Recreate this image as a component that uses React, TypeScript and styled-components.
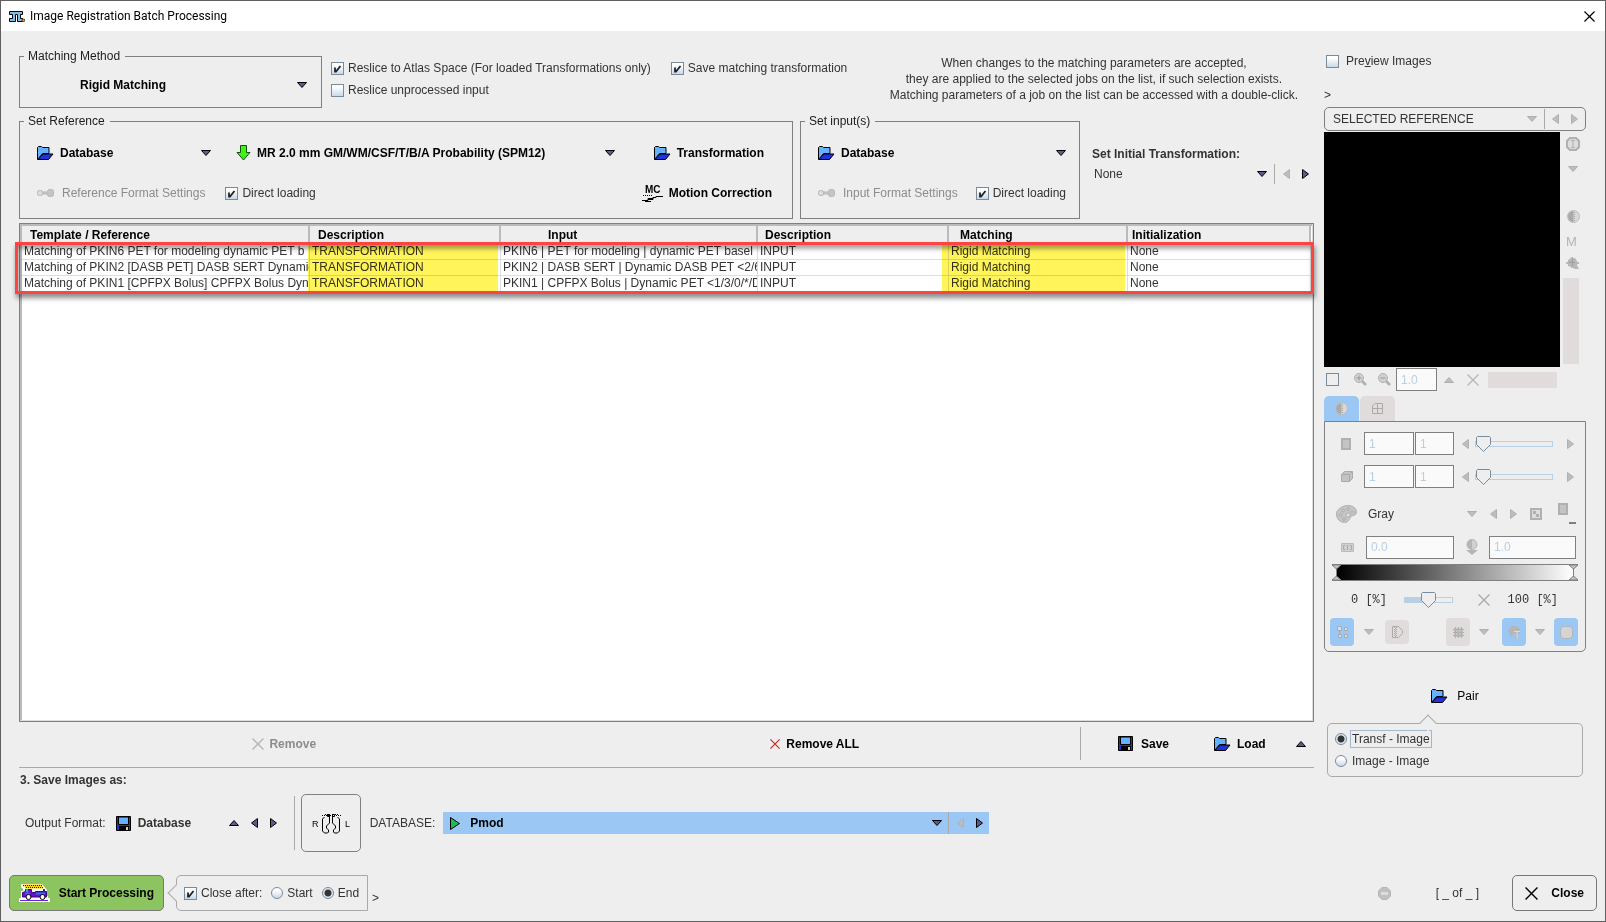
import React, { ReactNode } from 'react';
import styled, { createGlobalStyle, css } from 'styled-components';

const GlobalStyle = createGlobalStyle`
  *, *::before, *::after { box-sizing: border-box; }
  body { margin: 0; background: #eee; }
  body, button, input, select { font: 12px/16px "Liberation Sans", Arial, sans-serif; color: #333; }
  svg { display: block; flex: none; }
`;

/* ---------- shell ---------- */

const Window = styled.div`
  display: flex;
  flex-direction: column;
  min-height: 100vh;
  border: 1px solid #5f5f5f;
  background: #eee;
`;

const TitleBar = styled.header`
  display: flex;
  align-items: center;
  height: 30px;
  padding: 0 10px 0 8px;
  background: #fff;
`;

const Title = styled.h1`
  flex: 1;
  margin: 0 0 0 5px;
  font: 12px/16px Roboto, sans-serif;
  color: #000;
`;

const Content = styled.main`
  display: flex;
  flex: 1;
  gap: 10px;
  padding: 17px 19px 0 18px;
`;

const MainColumn = styled.div`
  display: flex;
  flex: 1;
  flex-direction: column;
  min-width: 0;
`;

const SideColumn = styled.aside`
  display: flex;
  flex-direction: column;
  width: 262px;
  flex: none;
`;

const Spacer = styled.span`
  flex: 1;
`;

/* ---------- controls ---------- */

const PlainButton = styled.button<{ $bold?: boolean; $gap?: number; $start?: number; $end?: number }>`
  display: inline-flex;
  align-items: center;
  gap: ${p => p.$gap ?? 6}px;
  margin: 0 ${p => p.$end ?? 0}px 0 ${p => p.$start ?? 0}px;
  padding: 0;
  border: 0;
  background: none;
  color: #000;
  font-weight: ${p => (p.$bold ? 700 : 400)};
  white-space: nowrap;
  &:disabled { color: #8c8c8c; }
`;

const ComboButton = styled(PlainButton)<{ $width: number }>`
  width: ${p => p.$width}px;
  text-align: left;
`;

const CheckLabel = styled.label<{ $gap?: number; $start?: number }>`
  display: inline-flex;
  align-items: center;
  gap: ${p => p.$gap ?? 4}px;
  margin-left: ${p => p.$start ?? 0}px;
  white-space: nowrap;
`;

const Check = styled.input.attrs({ type: 'checkbox' })<{ $flat?: boolean }>`
  appearance: none;
  flex: none;
  width: 13px;
  height: 13px;
  margin: 0;
  border: 1px solid #7a8a99;
  background: ${p => (p.$flat ? '#eee' : 'linear-gradient(#fff 20%, #c8d9ea)')};
  &:checked {
    background: url("data:image/svg+xml,%3Csvg xmlns='http://www.w3.org/2000/svg' width='11' height='11'%3E%3Cpath d='M3 4.500v4h1L8.500 3' fill='none' stroke='%23222' stroke-width='1.8'/%3E%3C/svg%3E"), linear-gradient(#fff 20%, #c8d9ea);
  }
`;

const Radio = styled.input.attrs({ type: 'radio' })`
  appearance: none;
  flex: none;
  width: 12px;
  height: 12px;
  margin: 0;
  border: 1px solid #7a8a99;
  border-radius: 50%;
  background: linear-gradient(#fff 25%, #c8d9ea);
  &:checked { background: radial-gradient(circle, #333 0 3px, #dce8f4 4px); }
`;

const TextBox = styled.input.attrs({ type: 'text' })<{ $width: number }>`
  width: ${p => p.$width}px;
  height: 23px;
  padding: 0 4px;
  border: 1px solid #808080;
  border-radius: 0;
  background: #fafafa;
  color: #b8cfe5;
  outline: 0;
`;

const VLine = styled.span<{ $height: number }>`
  flex: none;
  width: 1px;
  height: ${p => p.$height}px;
  background: #a9a9a9;
`;

const Group = styled.fieldset<{ $height: number }>`
  display: flex;
  flex-direction: column;
  min-width: 0;
  height: ${p => p.$height}px;
  margin: 0;
  padding: 0;
  border: 1px solid #808080;
`;

const Legend = styled.legend`
  margin-left: 4px;
  padding: 0 5px 0 4px;
  color: #1c1c1c;
`;

/* ---------- glyphs ---------- */

type Dir = 'down' | 'up' | 'left' | 'right';
const arrows: Record<Dir, [number, number, string]> = {
  down: [10, 6, 'M.5.5h9L5 5.5z'],
  up: [10, 6, 'M.5 5.5h9L5 .5z'],
  left: [7, 10, 'M6.5.5v9L.5 5z'],
  right: [7, 10, 'M.5.5v9L6.5 5z'],
};

function Arrow({ dir, off }: { dir: Dir; off?: boolean }) {
  const [w, h, d] = arrows[dir];
  return (
    <svg width={w} height={h} aria-hidden="true">
      <path d={d} fill={off ? '#bdbdbd' : '#5c5c8c'} stroke={off ? '#b0b0b0' : '#000'} />
    </svg>
  );
}

function ArrowButton({ dir, off, label }: { dir: Dir; off?: boolean; label: string }) {
  return <PlainButton disabled={off} aria-label={label}><Arrow dir={dir} off={off} /></PlainButton>;
}

const Folder = () => (
  <svg width="17" height="14" aria-hidden="true">
    <path d="M.5 13.500V1.500l1-1h3l1 1h6.500v6h-6.500z" fill="#63b1ff" stroke="#000" />
    <path d="M1 13.500l5-5.500H16L11.500 13.500z" fill="#2230e0" stroke="#000" />
  </svg>
);

const Disk = () => (
  <svg width="15" height="15" aria-hidden="true">
    <path d="M.5.5h14v14H.5z" fill="#2230d8" stroke="#000" />
    <path d="M2.500 1h10v7.500h-10z" fill="#63b1ff" stroke="#000" />
    <path d="M3 10h10v5H3z" />
    <path d="M10 11h2v3h-2z" fill="#ccc" />
  </svg>
);

const Plug = () => (
  <svg width="17" height="8" aria-hidden="true">
    <path d="M5 3h7v2H5z" fill="#ccc" stroke="#b5b5b5" />
    <rect x=".5" y="1.500" width="5" height="5" rx="2" fill="#ddd" stroke="#b5b5b5" />
    <rect x="10.500" y=".5" width="6" height="7" rx="2" fill="#c4c4c4" stroke="#b8b8b8" />
  </svg>
);

const GreenArrow = () => (
  <svg width="15" height="16" aria-hidden="true">
    <path d="M4.500.5h6v7h3.500L7.500 15 1 7.500h3.500z" fill="#3cf514" stroke="#174d10" />
  </svg>
);

const MotionIcon = () => (
  <svg width="21" height="17" aria-hidden="true" fill="none" stroke="#000">
    <text x="3" y="8" fontSize="10" fill="#000" stroke="none">MC</text>
    <path d="M1 10.500h10" strokeDasharray="1 1" />
    <path d="M0 15.500h6v-2h5v-1h3v-1h7M3 16.500h6M6 14.500h5v-2" />
  </svg>
);

const Cross = ({ size, color }: { size: number; color: string }) => (
  <svg width={size} height={size} viewBox="0 0 12 12" aria-hidden="true">
    <path d="M.5.5l11 11M11.500.5l-11 11" stroke={color} strokeWidth="1.300" />
  </svg>
);

const ZoomGlyph = ({ plus }: { plus?: boolean }) => (
  <svg width="13" height="13" aria-hidden="true" fill="#d0d0d0" stroke="#b0b0b0">
    <path d="M8 8l4 4" strokeWidth="2.500" />
    <circle cx="5" cy="5" r="4.500" />
    <path d={plus ? 'M2.500 5h5M5 2.500v5' : 'M2.500 5h5'} stroke="#999" />
  </svg>
);

const Contrast = () => (
  <svg width="13" height="13" aria-hidden="true">
    <circle cx="6.500" cy="6.500" r="6" fill="#d8d8d8" stroke="#bcbcbc" />
    <path d="M6.500 1a5.500 5.500 0 000 11z" fill="#aaa" />
    <path d="M7.500 2v9" stroke="#aaa" strokeDasharray="1 1" />
  </svg>
);

const Palette = () => (
  <svg width="21" height="18" aria-hidden="true" fill="#c6c6c6" stroke="#b0b0b0">
    <path d="M7 1.500C11-.5 20 0 20.500 7c0 4-4 3-6 5-1 2-2 5.500-6 5.500S.5 14 .5 9.500 3 3.500 7 1.500z" />
    <circle cx="4.500" cy="10" r="1.500" /><circle cx="7" cy="5.500" r="1.500" /><circle cx="12" cy="4" r="1.500" />
    <circle cx="16.500" cy="7.500" r="1.500" /><circle cx="12" cy="10" r="2" fill="#e4e4e4" /><circle cx="8" cy="14" r="1.500" />
  </svg>
);

const Truck = () => (
  <svg width="31" height="18" aria-hidden="true">
    <path d="M2 0h21l4 5 1 1v6h1v2h2v4H0v-4h2V7h2V5L2 3z" fill="#fff" />
    <path d="M4 1.500h19M6 3.500h18" stroke="#ffd400" strokeWidth="2" />
    <path d="M4 1.500h19M7 3.500h17" stroke="#222" strokeDasharray="1 1" />
    <path d="M3.500 13V8.500l3-1V5.500h6v3h4v-1h8V5.500h1v2h2v5.500z" fill="#6a10c8" stroke="#3a0880" />
    <path d="M6 9.500h5M17 9.500h9" stroke="#1c7ae0" strokeWidth="2" />
    <path d="M8 5v3" stroke="#1cb0c0" strokeWidth="2" />
    <circle cx="9.500" cy="13" r="2.500" fill="#fff" stroke="#000" /><circle cx="23.500" cy="13" r="2.500" fill="#fff" stroke="#000" />
    <path d="M1 16.500h28" stroke="#7020e0" />
  </svg>
);

/* ---------- main column ---------- */

const MethodRow = styled.div`
  display: flex;
  align-items: flex-start;
  height: 65px;
`;

const MethodGroup = styled(Group)`
  width: 303px;
  margin-right: 9px;
`;

const MethodBody = styled.div`
  display: flex;
  align-items: center;
  justify-content: space-between;
  padding: 13px 14px 0 60px;
`;

const Options = styled.div`
  display: grid;
  grid-template-columns: auto auto;
  gap: 6px 20px;
  padding-top: 12px;
`;

const Notice = styled.p`
  flex: 1;
  margin: 0;
  padding: 7px 16px 0 0;
  text-align: right;
`;

const NoticeText = styled.span`
  display: inline-block;
  text-align: center;
  white-space: nowrap;
`;

const SetupRow = styled.div`
  display: flex;
  align-items: flex-start;
  height: 110px;
`;

const ReferenceGroup = styled(Group)`
  flex: 1;
  margin-right: 7px;
`;

const InputGroup = styled(Group)`
  width: 280px;
  margin-right: 12px;
`;

const GroupLine = styled.div<{ $top: number }>`
  display: flex;
  align-items: center;
  height: 16px;
  margin-top: ${p => p.$top}px;
  padding: 0 20px 0 17px;
`;

const InputLine = styled(GroupLine)`
  padding: 0 13px 0 17px;
`;

const Initial = styled.div`
  width: 222px;
  padding: 33px 5px 0 0;
`;

const StrongText = styled.div`
  font-weight: 700;
`;

const InitialLine = styled.div`
  display: flex;
  align-items: center;
  height: 24px;
  padding-left: 2px;
`;

const ArrowPair = styled.span<{ $gap: number; $start?: number }>`
  display: inline-flex;
  align-items: center;
  gap: ${p => p.$gap}px;
  margin-left: ${p => p.$start ?? 7}px;
`;

const JobFrame = styled.section`
  position: relative;
  flex: 1;
  padding: 2px;
  border: 1px solid #808080;
  background: #fff;
  box-shadow: inset -1px -1px #ddd, inset 2px 2px #bbb;
`;

const JobTable = styled.table`
  width: 100%;
  table-layout: fixed;
  border-collapse: separate;
  border-spacing: 0;
`;

const HeadCell = styled.th<{ $pad: number }>`
  height: 18px;
  padding: 0 0 0 ${p => p.$pad}px;
  border-right: 2px solid #bbb;
  background: #eee;
  color: #000;
  text-align: left;
  line-height: 16px;
`;

const Cell = styled.td`
  height: 16px;
  padding: 0 0 0 2px;
  overflow: hidden;
  border-right: 1px solid #ddd;
  border-bottom: 1px solid #ddd;
  line-height: 15px;
  white-space: nowrap;
`;

const Marker = styled.div<{ $left: number; $width: number }>`
  position: absolute;
  top: 21px;
  left: ${p => p.$left}px;
  width: ${p => p.$width}px;
  height: 47px;
  background: #fff45a;
  mix-blend-mode: multiply;
  pointer-events: none;
`;

const Callout = styled.div`
  position: absolute;
  top: 18px;
  right: -1px;
  left: -5px;
  height: 52px;
  border: 3px solid #ff4343;
  box-shadow: 1px 4px 5px rgba(0, 0, 0, 0.45), inset 1px 4px 4px rgba(0, 0, 0, 0.35);
  pointer-events: none;
`;

const JobActions = styled.div`
  display: grid;
  grid-template-columns: 1fr 1fr 234px;
  align-items: center;
  height: 46px;
  padding-bottom: 2px;
  border-bottom: 1px solid #a9a9a9;
`;

const ActionCell = styled.div`
  display: flex;
  justify-content: center;
`;

const FileActions = styled.div`
  display: flex;
  align-items: center;
  padding-right: 8px;
`;

const SaveTitle = styled.h2`
  margin: 4px 0 6px 1px;
  font: 700 12px/16px "Liberation Sans", Arial, sans-serif;
`;

const OutputRow = styled.div`
  display: flex;
  align-items: center;
  height: 58px;
  padding-left: 6px;
`;

const OutputValue = styled.span`
  display: inline-flex;
  align-items: center;
  width: 113px;
  gap: 7px;
  margin-left: 10px;
  font-weight: 700;
`;

const ImageButton = styled.button`
  display: grid;
  place-items: center;
  width: 60px;
  height: 58px;
  margin: 0 9px 0 6px;
  padding: 0;
  border: 1px solid #808080;
  border-radius: 5px;
  background: none;
`;

const DatabaseBar = styled.div`
  display: flex;
  flex: 0 1 546px;
  align-items: center;
  height: 22px;
  margin-left: 8px;
  padding: 0 6px 0 7px;
  background: #9ac7f3;
`;

/* ---------- footer ---------- */

const Footer = styled.footer`
  display: flex;
  align-items: center;
  height: 36px;
  margin: 23px 8px 10px;
`;

const FramedButton = styled.button<{ $green?: boolean; $width: number }>`
  display: flex;
  align-items: center;
  justify-content: space-between;
  width: ${p => p.$width}px;
  height: 36px;
  padding: 0 ${p => (p.$green ? 9 : 12)}px;
  border: 1px solid #777;
  border-radius: 5px;
  background: ${p => (p.$green ? '#8cc55f' : 'none')};
  color: #000;
  font-weight: 700;
`;

const bubble = css`
  position: relative;
  border: 1px solid #a9a9a9;
  &::before {
    content: "";
    position: absolute;
    width: 12px;
    height: 12px;
    border: solid #a9a9a9;
    background: #eee;
    transform: rotate(45deg);
  }
`;

const CloseAfter = styled.div`
  ${bubble}
  display: flex;
  align-items: center;
  height: 36px;
  margin-left: 12px;
  padding: 0 8px 0 7px;
  border-radius: 5px 0 0 5px;
  gap: 9px;
  &::before { top: 11px; left: -7px; border-width: 0 0 1px 1px; }
`;

const More = styled.span`
  margin: 10px 0 0 4px;
  line-height: 12px;
`;

const Progress = styled.span`
  margin: 0 33px 0 45px;
`;

/* ---------- side column ---------- */

const PreviewHead = styled.div`
  display: flex;
  flex-direction: column;
  align-items: flex-start;
  height: 59px;
  padding: 5px 0 0 2px;
  gap: 18px;
`;

const Chevron = styled.span`
  margin-left: -2px;
  line-height: 16px;
`;

const ReferenceBox = styled.div`
  display: flex;
  align-items: center;
  height: 24px;
  padding: 0 7px 0 8px;
  border: 1px solid #808080;
  border-radius: 5px;
`;

const Viewer = styled.div`
  display: flex;
  height: 235px;
  margin-top: 1px;
`;

const Canvas = styled.div`
  flex: 1;
  background: #000;
`;

const ViewerTools = styled.div`
  display: flex;
  flex-direction: column;
  align-items: center;
  width: 26px;
  padding-top: 5px;
`;

const ToolSlot = styled.div<{ $height: number }>`
  height: ${p => p.$height}px;
`;

const Shade = styled.span<{ $width: number; $height: number }>`
  width: ${p => p.$width}px;
  height: ${p => p.$height}px;
  margin-right: 4px;
  background: #e0dcdb;
`;

const ZoomRow = styled.div`
  display: flex;
  align-items: center;
  height: 26px;
  padding: 0 0 1px 2px;
`;

const ZoomItem = styled.span<{ $start: number }>`
  display: flex;
  margin-left: ${p => p.$start}px;
`;

const Tabs = styled.div`
  display: flex;
  gap: 1px;
  height: 25px;
  margin-top: 3px;
`;

const Tab = styled.button<{ $on?: boolean }>`
  display: grid;
  place-items: center;
  width: 35px;
  padding: 0;
  border: 0;
  border-radius: 5px 5px 0 0;
  background: ${p => (p.$on ? '#9ac7f3' : '#e0dcdb')};
`;

const Panel = styled.div`
  display: flex;
  flex-direction: column;
  height: 231px;
  padding: 10px 7px 0 5px;
  border: 1px solid #808080;
  border-radius: 0 0 5px 5px;
`;

const Line = styled.div<{ $height: number; $left?: number; $right?: number }>`
  display: flex;
  align-items: center;
  height: ${p => p.$height}px;
  padding: 0 ${p => p.$right ?? 0}px 0 ${p => p.$left ?? 0}px;
`;

const IconSlot = styled.span<{ $width: number }>`
  display: flex;
  align-items: center;
  width: ${p => p.$width}px;
`;

const RangePair = styled.div`
  display: flex;
  gap: 1px;
  margin-right: 8px;
`;

const Slider = styled.input.attrs({ type: 'range' })<{ $width: number; $filled?: boolean }>`
  appearance: none;
  width: ${p => p.$width}px;
  height: 16px;
  margin: 0;
  background: none;
  &::-webkit-slider-runnable-track {
    height: 6px;
    border: 1px solid #b8cfe5;
    background: ${p => (p.$filled ? 'linear-gradient(90deg, #b8cfe5 50%, #eee 50%)' : '#eee')};
  }
  &::-webkit-slider-thumb {
    appearance: none;
    width: 15px;
    height: 16px;
    margin-top: -6px;
    background: url("data:image/svg+xml,%3Csvg xmlns='http://www.w3.org/2000/svg' width='15' height='16'%3E%3Cpath d='M1.500.5h12l1 1v7L7.500 15.500.5 8.500v-7z' fill='%23eee' stroke='%237a8a99'/%3E%3C/svg%3E");
  }
`;

const Ramp = styled.div`
  display: flex;
  align-items: center;
  justify-content: space-between;
  height: 17px;
  margin-left: 2px;
  border: solid #808080;
  border-width: 1px 0;
  background: linear-gradient(90deg, #eee 4px, #000 4px 6px, #fff calc(100% - 5px), #eee calc(100% - 4px));
`;

const Mono = styled.span`
  font: 12px/16px "Liberation Mono", monospace;
  white-space: pre;
`;

const SmallButton = styled.button<{ $on?: boolean; $height?: number }>`
  display: grid;
  place-items: center;
  width: 24px;
  height: ${p => p.$height ?? 28}px;
  padding: 0;
  border: 0;
  border-radius: 4px;
  background: ${p => (p.$on ? '#9ac7f3' : '#e0dcdb')};
`;

const PairLine = styled.div`
  display: flex;
  justify-content: center;
  margin: 36px 0 19px;
`;

const PairChoice = styled.div`
  ${bubble}
  display: flex;
  flex-direction: column;
  align-items: flex-start;
  gap: 6px;
  height: 54px;
  margin: 0 3px;
  padding: 7px;
  border-radius: 5px;
  &::before { top: -7px; left: 94px; border-width: 1px 0 0 1px; }
`;

const ChoiceText = styled.span<{ $focus?: boolean }>`
  padding: 0 1px;
  outline: ${p => (p.$focus ? '1px solid #a3b8cc' : 'none')};
`;

const jobs = [
  ['Matching of PKIN6 PET for modeling dynamic PET b', 'TRANSFORMATION', 'PKIN6 | PET for modeling | dynamic PET basel', 'INPUT', 'Rigid Matching', 'None'],
  ['Matching of PKIN2 [DASB PET] DASB SERT Dynamic', 'TRANSFORMATION', 'PKIN2 | DASB SERT | Dynamic DASB PET <2/6', 'INPUT', 'Rigid Matching', 'None'],
  ['Matching of PKIN1 [CPFPX Bolus] CPFPX Bolus Dyn', 'TRANSFORMATION', 'PKIN1 | CPFPX Bolus | Dynamic PET <1/3/0/*/D', 'INPUT', 'Rigid Matching', 'None'],
];

const columns: [string, number, number | undefined][] = [
  ['Template / Reference', 8, 288],
  ['Description', 8, 191],
  ['Input', 47, 257],
  ['Description', 7, 191],
  ['Matching', 11, 179],
  ['Initialization', 4, undefined],
];

function SliceLine({ label, icon }: { label: string; icon: ReactNode }) {
  return (
    <Line $height={23} $left={11} $right={4}>
      <IconSlot $width={24}>{icon}</IconSlot>
      <RangePair>
        <TextBox $width={50} defaultValue="1" aria-label={`${label} from`} />
        <TextBox $width={39} defaultValue="1" aria-label={`${label} to`} />
      </RangePair>
      <ArrowButton dir="left" off label={`Previous ${label}`} />
      <ArrowPair $gap={14} $start={6}>
        <Slider $width={78} defaultValue={0} aria-label={label} />
        <ArrowButton dir="right" off label={`Next ${label}`} />
      </ArrowPair>
    </Line>
  );
}

const Sheet = () => (
  <svg width="10" height="12" aria-hidden="true"><path d="M1 1h8v10H1z" fill="#c4c4c4" stroke="#b0b0b0" strokeWidth="2" /></svg>
);

const RampHandle = () => (
  <svg width="9" height="17" aria-hidden="true"><path d="M0 1h9L4.500 5zM0 16h9l-4.500-4zM4.500 4v9" fill="#c4c4c4" stroke="#808080" /></svg>
);

export default function App() {
  return (
    <Window>
      <GlobalStyle />
      <TitleBar>
        <svg width="16" height="11" aria-hidden="true">
          <path d="M.5.500h13v3h-2v4h2v3h-5v-7h-2v7h-6v-3h3v-4h-3z" fill="#7cc0ea" stroke="#000" />
          <path d="M13 8h2.500v2.500H13z" fill="#f80" stroke="#000" strokeWidth=".5" />
        </svg>
        <Title>Image Registration Batch Processing</Title>
        <PlainButton aria-label="Close window"><Cross size={11} color="#000" /></PlainButton>
      </TitleBar>

      <Content>
        <MainColumn>
          <MethodRow>
            <MethodGroup $height={60}>
              <Legend>Matching Method</Legend>
              <MethodBody>
                <PlainButton $bold>Rigid Matching</PlainButton>
                <ArrowButton dir="down" label="Choose matching method" />
              </MethodBody>
            </MethodGroup>
            <Options>
              <CheckLabel><Check defaultChecked />Reslice to Atlas Space (For loaded Transformations only)</CheckLabel>
              <CheckLabel><Check defaultChecked />Save matching transformation</CheckLabel>
              <CheckLabel><Check />Reslice unprocessed input</CheckLabel>
            </Options>
            <Notice>
              <NoticeText>
                When changes to the matching parameters are accepted,<br />
                they are applied to the selected jobs on the list, if such selection exists.<br />
                Matching parameters of a job on the list can be accessed with a double-click.
              </NoticeText>
            </Notice>
          </MethodRow>

          <SetupRow>
            <ReferenceGroup $height={106}>
              <Legend>Set Reference</Legend>
              <GroupLine $top={16}>
                <ComboButton $bold $width={174}><Folder />Database<Spacer /><Arrow dir="down" /></ComboButton>
                <ComboButton $bold $width={379} $start={25}><GreenArrow />MR 2.0 mm GM/WM/CSF/T/B/A Probability (SPM12)<Spacer /><Arrow dir="down" /></ComboButton>
                <Spacer />
                <PlainButton $bold $end={8}><Folder />Transformation</PlainButton>
              </GroupLine>
              <GroupLine $top={24}>
                <PlainButton disabled $gap={8}><Plug />Reference Format Settings</PlainButton>
                <CheckLabel $start={20}><Check defaultChecked />Direct loading</CheckLabel>
                <Spacer />
                <PlainButton $bold><MotionIcon />Motion Correction</PlainButton>
              </GroupLine>
            </ReferenceGroup>
            <InputGroup $height={106}>
              <Legend>Set input(s)</Legend>
              <InputLine $top={16}>
                <ComboButton $bold $width={248}><Folder />Database<Spacer /><Arrow dir="down" /></ComboButton>
              </InputLine>
              <InputLine $top={24}>
                <PlainButton disabled $gap={8}><Plug />Input Format Settings</PlainButton>
                <Spacer />
                <CheckLabel><Check defaultChecked />Direct loading</CheckLabel>
              </InputLine>
            </InputGroup>
            <Initial>
              <StrongText>Set Initial Transformation:</StrongText>
              <InitialLine>
                None<Spacer />
                <ArrowButton dir="down" label="Choose initial transformation" />
                <ArrowPair $gap={8}><VLine $height={20} /><ArrowButton dir="left" off label="Previous" /></ArrowPair>
                <ArrowPair $gap={8} $start={12}><ArrowButton dir="right" label="Next" /></ArrowPair>
              </InitialLine>
            </Initial>
          </SetupRow>

          <JobFrame>
            <JobTable>
              <colgroup>{columns.map(([, , w], i) => <col key={i} width={w} />)}</colgroup>
              <thead>
                <tr>{columns.map(([name, pad], i) => <HeadCell key={i} $pad={pad}>{name}</HeadCell>)}</tr>
              </thead>
              <tbody>
                {jobs.map(job => (
                  <tr key={job[0]}>{job.map((text, i) => <Cell key={i}>{text}</Cell>)}</tr>
                ))}
              </tbody>
            </JobTable>
            <Marker $left={288} $width={190} />
            <Marker $left={922} $width={183} />
            <Callout />
          </JobFrame>

          <JobActions>
            <ActionCell><PlainButton $bold disabled $gap={5}><Cross size={12} color="#b5b5b5" />Remove</PlainButton></ActionCell>
            <ActionCell><PlainButton $bold><Cross size={10} color="#c8201c" />Remove ALL</PlainButton></ActionCell>
            <FileActions>
              <VLine $height={33} />
              <PlainButton $bold $gap={8} $start={37}><Disk />Save</PlainButton>
              <PlainButton $bold $start={45}><Folder />Load</PlainButton>
              <Spacer />
              <ArrowButton dir="up" label="More file actions" />
            </FileActions>
          </JobActions>

          <SaveTitle>3. Save Images as:</SaveTitle>
          <OutputRow>
            Output Format:
            <OutputValue><Disk />Database</OutputValue>
            <ArrowPair $gap={12} $start={0}>
              <ArrowButton dir="up" label="Choose output format" />
              <ArrowButton dir="left" label="Previous format" />
              <ArrowButton dir="right" label="Next format" />
            </ArrowPair>
            <ArrowPair $gap={0} $start={17}><VLine $height={54} /></ArrowPair>
            <ImageButton aria-label="Image orientation">
              <svg width="40" height="21" aria-hidden="true" fill="none" stroke="#000">
                <text x="1" y="14" fontSize="9" fill="#000" stroke="none">R</text>
                <text x="34" y="14" fontSize="9" fill="#000" stroke="none">L</text>
                <path d="M18.500 1v9l-3 3v2l2 2v2l-1 1h-3l-2-2V6l2-2M21.500 1v9l3 3v2l-2 2v2l1 1h3l2-2V6l-2-2" />
                <path d="M11 2.500h19M14 1.500h3M24 1.500h3" strokeDasharray="1 1" />
                <path d="M16.500 1.500h2v2h-2zM21.500 1.500h2v2h-2z" />
              </svg>
            </ImageButton>
            DATABASE:
            <DatabaseBar>
              <PlainButton $bold $gap={9}>
                <svg width="11" height="13" aria-hidden="true"><path d="M.5.500v12l9-6z" fill="#23b85c" stroke="#000" /></svg>
                Pmod
              </PlainButton>
              <Spacer />
              <ArrowButton dir="down" label="Choose database" />
              <ArrowPair $gap={8} $start={6}><VLine $height={22} /><ArrowButton dir="left" off label="Previous database" /></ArrowPair>
              <ArrowPair $gap={0} $start={12}><ArrowButton dir="right" label="Next database" /></ArrowPair>
            </DatabaseBar>
          </OutputRow>
        </MainColumn>

        <SideColumn>
          <PreviewHead>
            <CheckLabel $gap={7}><Check /><span>Pre<u>v</u>iew Images</span></CheckLabel>
            <Chevron>&gt;</Chevron>
          </PreviewHead>
          <ReferenceBox>
            SELECTED REFERENCE<Spacer />
            <ArrowButton dir="down" off label="Choose reference" />
            <ArrowPair $gap={7}><VLine $height={20} /><ArrowButton dir="left" off label="Previous reference" /></ArrowPair>
            <ArrowPair $gap={0} $start={12}><ArrowButton dir="right" off label="Next reference" /></ArrowPair>
          </ReferenceBox>
          <Viewer>
            <Canvas />
            <ViewerTools>
              <ToolSlot $height={29}>
                <svg width="14" height="14" aria-hidden="true" fill="#ddd" stroke="#b0b0b0"><path d="M4 1h6l3 3v6l-3 3H4l-3-3V4z" strokeWidth="2" /><path d="M5 3.500h4M7 3.500v7M5 10.500h4" /></svg>
              </ToolSlot>
              <ToolSlot $height={44}><Arrow dir="down" off /></ToolSlot>
              <ToolSlot $height={26}><Contrast /></ToolSlot>
              <ToolSlot $height={21}>
                <svg width="14" height="10" aria-hidden="true"><text x="0" y="10" fontSize="13" fill="#b5b5b5">M</text></svg>
              </ToolSlot>
              <ToolSlot $height={21}>
                <svg width="14" height="13" aria-hidden="true"><path d="M5 0h2v1h2l2 3v1h2v2h-2v1l2 4h-4L7 11H5v-1L2 9V7H0V5h2V3l3-2z" fill="#b8b8b8" /><path d="M3 5.500h6M6.500 2v7" stroke="#9e9e9e" /></svg>
              </ToolSlot>
              <Shade $width={16} $height={86} />
            </ViewerTools>
          </Viewer>
          <ZoomRow>
            <Check $flat aria-label="Lock zoom" />
            <ZoomItem $start={15}><ZoomGlyph plus /></ZoomItem>
            <ZoomItem $start={11}><ZoomGlyph /></ZoomItem>
            <ZoomItem $start={5}><TextBox $width={41} defaultValue="1.0" aria-label="Zoom" /></ZoomItem>
            <ZoomItem $start={7}><Arrow dir="up" off /></ZoomItem>
            <ZoomItem $start={13}><Cross size={12} color="#b5b5b5" /></ZoomItem>
            <ZoomItem $start={9}><Shade $width={69} $height={16} /></ZoomItem>
          </ZoomRow>
          <Tabs>
            <Tab $on aria-label="Colors"><Contrast /></Tab>
            <Tab aria-label="Layout">
              <svg width="11" height="11" aria-hidden="true" fill="none" stroke="#aaa"><path d="M3 .5h7.500v10H.5V3zM.5 5.500h10M5.500.5v10" /></svg>
            </Tab>
          </Tabs>
          <Panel>
            <SliceLine label="slice" icon={<Sheet />} />
            <Line $height={10} />
            <SliceLine label="volume" icon={<svg width="12" height="12" aria-hidden="true" fill="#c4c4c4" stroke="#aaa"><path d="M3.500.5h8v7l-3 3h-8v-7zM.5 3.500h8v7M8.500 3.500l3-3" /></svg>} />
            <Line $height={3} />
            <Line $height={45} $left={6} $right={2}>
              <IconSlot $width={32}><Palette /></IconSlot>
              Gray
              <Spacer />
              <ArrowPair $gap={13}>
                <ArrowButton dir="down" off label="Choose palette" />
                <ArrowButton dir="left" off label="Previous palette" />
                <ArrowButton dir="right" off label="Next palette" />
                <svg width="12" height="12" aria-hidden="true"><path d="M1 1h10v10H1z" fill="#ddd" stroke="#b0b0b0" strokeWidth="2" /><path d="M3 3h3v3H3zM6 6h3v3H6z" fill="#b0b0b0" /></svg>
              </ArrowPair>
              <ArrowPair $gap={0} $start={16}>
                <svg width="18" height="21" aria-hidden="true"><path d="M1 1h8v10H1z" fill="#c4c4c4" stroke="#b0b0b0" strokeWidth="2" /><path d="M11 20h7" stroke="#808080" strokeWidth="2" /></svg>
              </ArrowPair>
            </Line>
            <Line $height={22} $left={11} $right={2}>
              <IconSlot $width={25}>
                <svg width="13" height="9" aria-hidden="true" fill="none" stroke="#aaa"><path d="M.5.500h12v8H.5z" fill="#d0d0d0" stroke="#bbb" /><path d="M4 2.500H2.500v4H4M6.500 2v5M9 2.500h1.500v4H9" /></svg>
              </IconSlot>
              <TextBox $width={88} defaultValue="0.0" aria-label="Lower threshold" />
              <Spacer />
              <svg width="12" height="16" aria-hidden="true"><circle cx="6" cy="5.500" r="5" fill="#d0d0d0" stroke="#b5b5b5" /><path d="M6 .5a5 5 0 000 10zM0 11h12l-6 5z" fill="#b5b5b5" /></svg>
              <Spacer />
              <TextBox $width={87} defaultValue="1.0" aria-label="Upper threshold" />
            </Line>
            <Line $height={6} />
            <Ramp><RampHandle /><RampHandle /></Ramp>
            <Line $height={37} $left={21} $right={20}>
              <Mono>0 [%]</Mono>
              <ArrowPair $gap={25} $start={17}>
                <Slider $width={49} $filled defaultValue={50} aria-label="Window" />
                <Cross size={12} color="#a9a9a9" />
              </ArrowPair>
              <Spacer />
              <Mono>100 [%]</Mono>
            </Line>
            <Line $height={28}>
              <SmallButton $on aria-label="Nodes">
                <svg width="11" height="12" aria-hidden="true" fill="#ddd" stroke="#aaa"><path d="M.5.500h4v4h-4zM7.500 1.500h3v3h-3zM1.500 8.500h3v3h-3zM7.500 8.500h3v3h-3zM2.500 5v3" /></svg>
              </SmallButton>
              <ArrowPair $gap={11} $start={10}>
                <ArrowButton dir="down" off label="Node options" />
                <SmallButton $height={24} aria-label="Half view">
                  <svg width="11" height="12" aria-hidden="true" fill="none" stroke="#aaa"><path d="M.5.500h6l4 4v3l-4 4h-6z" /><path d="M2.500 1v10M4.500 1v10M3.500 2v9" strokeDasharray="1 1" /></svg>
                </SmallButton>
              </ArrowPair>
              <Spacer />
              <ArrowPair $gap={9}>
                <SmallButton aria-label="Grid">
                  <svg width="11" height="11" aria-hidden="true" fill="#c4c4c4" stroke="#b0b0b0"><path d="M1 1h9v9H1z" stroke="none" /><path d="M0 2.500h11M0 5.500h11M0 8.500h11M2.500 0v11M5.500 0v11M8.500 0v11" /></svg>
                </SmallButton>
                <ArrowButton dir="down" off label="Grid options" />
              </ArrowPair>
              <ArrowPair $gap={9} $start={13}>
                <SmallButton $on aria-label="Annotations">
                  <svg width="13" height="13" aria-hidden="true"><path d="M1 3l3-3h5l3 3v4l-3 1v5H7V7H5v3H2V7L0 6z" fill="#b5b5b5" /><path d="M6 5.500h6M9 5.500v7" stroke="#ddd" /></svg>
                </SmallButton>
                <ArrowButton dir="down" off label="Annotation options" />
                <SmallButton $on aria-label="Shape">
                  <svg width="13" height="13" aria-hidden="true"><path d="M3 .5h7L12.500 3v7L10 12.500H3L.5 10V3z" fill="#d4d4d4" stroke="#b5b5b5" /></svg>
                </SmallButton>
              </ArrowPair>
            </Line>
          </Panel>
          <PairLine><PlainButton $gap={9}><Folder />Pair</PlainButton></PairLine>
          <PairChoice>
            <CheckLabel><Radio name="pair" defaultChecked /><ChoiceText $focus>Transf - Image</ChoiceText></CheckLabel>
            <CheckLabel><Radio name="pair" /><ChoiceText>Image - Image</ChoiceText></CheckLabel>
          </PairChoice>
        </SideColumn>
      </Content>

      <Footer>
        <FramedButton $green $width={155}><Truck />Start Processing</FramedButton>
        <CloseAfter>
          <CheckLabel><Check defaultChecked />Close after:</CheckLabel>
          <CheckLabel><Radio name="closeAfter" />Start</CheckLabel>
          <CheckLabel><Radio name="closeAfter" defaultChecked />End</CheckLabel>
        </CloseAfter>
        <More>&gt;</More>
        <Spacer />
        <svg width="13" height="13" aria-hidden="true"><path d="M4 .5h5L12.500 4v5L9 12.500H4L.5 9V4z" fill="#c0c0c0" stroke="#b5b5b5" /><path d="M3 5h7v3H3z" fill="#ddd" /></svg>
        <Progress>[ _ of _ ]</Progress>
        <FramedButton $width={85}><Cross size={13} color="#000" />Close</FramedButton>
      </Footer>
    </Window>
  );
}
